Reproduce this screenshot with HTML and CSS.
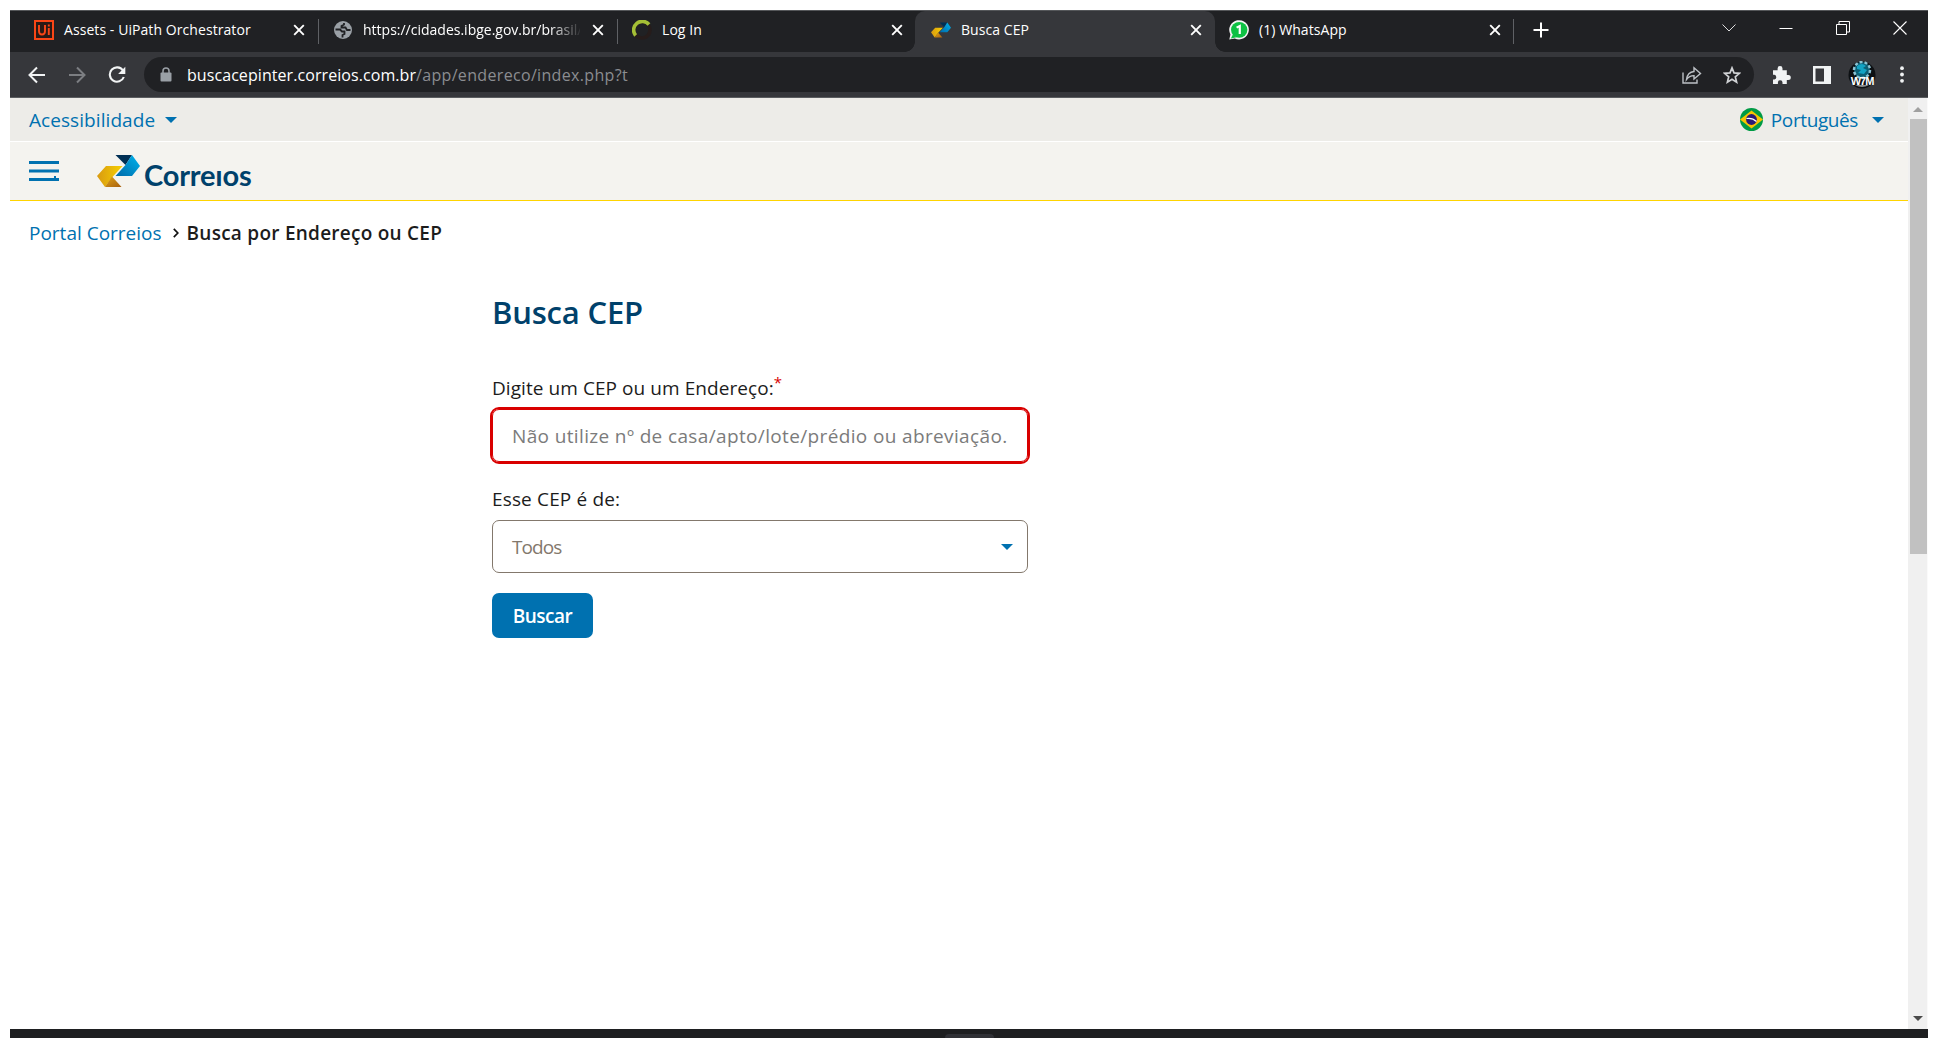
FILE: index.html
```html
<!DOCTYPE html>
<html lang="pt-BR">
<head>
<meta charset="utf-8">
<title>Busca CEP</title>
<link rel="stylesheet" href="styles.css">
</head>
<body>
<svg class="defs" width="0" height="0">
  <defs>
    <linearGradient id="gold" x1="0" y1="0" x2="1" y2="0"><stop offset="0" stop-color="#d99a12"/><stop offset="1" stop-color="#f6d000"/></linearGradient>
    <linearGradient id="brown" x1="0" y1="0" x2="1" y2="1"><stop offset="0" stop-color="#e0a518"/><stop offset="1" stop-color="#a8600f"/></linearGradient>
    <linearGradient id="sky" x1="0" y1="1" x2="1" y2="0"><stop offset="0" stop-color="#0069a8"/><stop offset="1" stop-color="#00b4ee"/></linearGradient>
    <symbol id="mark" viewBox="0 0 43 32">
      <path d="M9 11h16.500L15 22.500 8 32 0 21z" fill="url(#gold)"/>
      <path d="M15 21.500L24.500 32H8z" fill="url(#brown)"/>
      <path d="M18.500 0H35L28.500 10z" fill="#002f54"/>
      <path d="M35 0l8 11-8 10H18.500L28.500 10z" fill="url(#sky)"/>
    </symbol>
    <symbol id="close" viewBox="0 0 12 12"><path d="M1.200 1.200l9.600 9.600M10.800 1.200l-9.600 9.600" stroke="#fff" stroke-width="1.900"/></symbol>
  </defs>
</svg>
<div class="window">
  <div class="tabs">
    <div class="tab">
      <svg class="fav" width="20" height="20" viewBox="0 0 20 20"><path d="M1 1h18v18H1z" fill="#2b1a16" stroke="#fa4616" stroke-width="2"/><path d="M5 5v6q0 3.500 3 3.500T11 11V5M14.800 8v7M14.800 4.500v2" fill="none" stroke="#fa4616" stroke-width="1.900"/></svg>
      <span class="title">Assets - UiPath Orchestrator</span>
      <svg class="x" width="12" height="12"><use href="#close"/></svg>
    </div>
    <div class="tab sep">
      <svg class="fav" width="20" height="20" viewBox="0 0 20 20"><circle cx="10" cy="10" r="9" fill="#9aa0a6"/><path d="M2.500 9.500h4.500l2 2h2.500v2.500l-2 1v2.500M11 3v1.500L8.500 6v1.500h4L14 10h3.500" fill="none" stroke="#202124" stroke-width="1.800"/></svg>
      <span class="title clip">https://cidades.ibge.gov.br/brasil/</span>
      <svg class="x" width="12" height="12"><use href="#close"/></svg>
    </div>
    <div class="tab sep">
      <svg class="fav" width="20" height="20" viewBox="0 0 20 20"><circle cx="10" cy="10" r="8" fill="none" stroke="#261c1b" stroke-width="3.600"/><path d="M3.600 15.500A8.200 8.200 0 0 1 17 4.500" fill="none" stroke="#a5bf36" stroke-width="3.600"/></svg>
      <span class="title">Log In</span>
      <svg class="x" width="12" height="12"><use href="#close"/></svg>
    </div>
    <div class="tab active">
      <svg class="fav" width="20" height="20"><use href="#mark"/></svg>
      <span class="title">Busca CEP</span>
      <svg class="x" width="12" height="12"><use href="#close"/></svg>
    </div>
    <div class="tab last">
      <svg class="fav" width="20" height="20" viewBox="0 0 21 25" preserveAspectRatio="none"><path d="M.3 24.500L1.500 18A10.300 12 0 1 1 6 23z" fill="#f4f4f4"/><ellipse cx="10.700" cy="12.300" rx="8.600" ry="9.800" fill="#0dc143"/><path d="M2 23l2-5 4 3.500z" fill="#0dc143"/><path d="M8 9.500L11.300 7.500V17.500" fill="none" stroke="#fff" stroke-width="2.300"/></svg>
      <span class="title">(1) WhatsApp</span>
      <svg class="x" width="12" height="12"><use href="#close"/></svg>
    </div>
    <div class="newtab"><svg width="16" height="16" viewBox="0 0 16 16"><path d="M8 .5v15M.5 8h15" stroke="#fff" stroke-width="2"/></svg></div>
    <div class="controls">
      <svg width="14" height="8" viewBox="0 0 14 8"><path d="M.5.500L7 7l6.500-6.500" fill="none" stroke="#ddd"/></svg>
      <svg width="14" height="8" viewBox="0 0 14 8"><path d="M.5 4.500h13" stroke="#fff"/></svg>
      <svg width="14" height="14" viewBox="0 0 14 14"><path d="M.5 3.500h10v10H.5zM3 3.500v-3h10.500v10.500h-3" fill="none" stroke="#fff"/></svg>
      <svg width="14" height="14" viewBox="0 0 14 14"><path d="M.5.500l13 13M13.500.500l-13 13" stroke="#fff" stroke-width="1.100"/></svg>
    </div>
  </div>
  <div class="toolbar">
    <svg class="back" width="18" height="18" viewBox="0 0 18 18"><path d="M17 9H2M9 1.500L1.500 9 9 16.500" fill="none" stroke="#f1f3f4" stroke-width="2"/></svg>
    <svg class="fwd" width="18" height="18" viewBox="0 0 18 18"><path d="M1 9h15M9 1.500L16.500 9 9 16.500" fill="none" stroke="#7c7e82" stroke-width="2"/></svg>
    <svg class="reload" width="18" height="18" viewBox="0 0 18 18"><path d="M15 4.500A7.200 7.200 0 1 0 15.800 11" fill="none" stroke="#f1f3f4" stroke-width="2.100"/><path d="M17.300.800v7.200h-7.200z" fill="#f1f3f4"/></svg>
    <div class="omni">
      <svg width="12" height="15" viewBox="0 0 12 15"><path d="M3 6V4a3 3 0 0 1 6 0v2" fill="none" stroke="#9aa0a6" stroke-width="1.500"/><rect x=".5" y="5.500" width="11" height="9" rx="1" fill="#9aa0a6"/></svg>
      <span class="url">buscacepinter.correios.com.br<span class="path">/app/endereco/index.php?t</span></span>
      <svg class="share" width="20" height="18" viewBox="0 0 20 18"><path d="M1 6.500V17h14v-3.500" fill="none" stroke="#bdc1c6" stroke-width="1.400"/><path d="M4.500 13.500Q5.500 6 12 5.500V1.800L18.500 7.500 12 13V9.600Q7.500 9.500 4.500 13.500z" fill="none" stroke="#bdc1c6" stroke-width="1.400"/></svg>
      <svg class="star" width="18" height="18" viewBox="0 0 18 18"><path d="M9 1.900l2 5 5.400.400-4.100 3.500 1.300 5.300L9 13.200l-4.600 2.900 1.300-5.300L1.600 7.300 7 6.900z" fill="none" stroke="#d0d2d5" stroke-width="1.700"/></svg>
    </div>
    <svg class="ext" width="18" height="18" viewBox="0 0 18 18"><path d="M0 4.200h4.600V2.500a2.400 2.400 0 0 1 4.900 0v1.700h4.300v4.700h1.500a2.500 2.500 0 0 1 0 5h-1.500V18H9.500v-1.500a2.300 2.300 0 0 0-4.600 0V18H0v-4.500h1.400a2.400 2.400 0 0 0 0-4.700H0z" fill="#f1f3f4"/></svg>
    <svg class="panel" width="18" height="18" viewBox="0 0 18 18"><path d="M0 0h18v18H0zM2.500 2.500v13H11v-13z" fill="#f1f3f4" fill-rule="evenodd"/></svg>
    <svg class="avatar" width="28" height="28" viewBox="0 0 28 28"><circle cx="14" cy="14" r="13.500" fill="#0d1013"/><circle cx="14" cy="9" r="8" fill="#0c5f75" stroke="#8ec3d3" stroke-width="2.500" stroke-dasharray="3 2"/><path d="M9 5q5-4 9 0l-3 2 4 2-3 4-6-1 3-3-4-1z" fill="#13a3c4"/><path d="M7 24q7 4 14 0z" fill="#8b8e90"/><text x="14" y="23.500" text-anchor="middle">W7M</text></svg>
    <svg class="menu" width="4" height="17" viewBox="0 0 4 17"><circle cx="2" cy="2.200" r="1.900"/><circle cx="2" cy="8.500" r="1.900"/><circle cx="2" cy="14.800" r="1.900"/></svg>
  </div>
  <div class="view">
    <div class="page">
      <div class="access">
        <a><span class="acc">Acessibilidade</span><i class="caret"></i></a>
        <a class="lang"><svg width="23" height="23" viewBox="0 0 23 23"><circle cx="11.500" cy="11.500" r="11.500" fill="#009b45"/><path d="M0 11.500L11.500 2.500 23 11.500 11.500 20.500z" fill="#f7c400"/><circle cx="11.500" cy="11.500" r="5.400" fill="#2b1a75"/><path d="M6.500 10.500q6-1 10 3" fill="none" stroke="#fff" stroke-width="1.200"/></svg><span class="pt">Português</span><i class="caret"></i></a>
      </div>
      <div class="header">
        <svg class="burger" width="30" height="20" viewBox="0 0 30 20"><path d="M0 1.500h30M0 10h30M0 18.500h30M25 16.500h2" stroke="#0071b0" stroke-width="3"/></svg>
        <svg class="logo" width="43" height="32"><use href="#mark"/></svg>
        <span class="brand">Correıos</span>
      </div>
      <div class="crumbs"><span>Portal Correios</span><svg width="6" height="10" viewBox="0 0 6 10"><path d="M.8.800L4.800 5 .8 9.200" fill="none" stroke="#111" stroke-width="1.700"/></svg><b class="here">Busca por Endereço ou CEP</b></div>
      <div class="form">
        <h1>Busca CEP</h1>
        <label>Digite um CEP ou um Endereço:<sup>*</sup></label>
        <div class="field error"><span class="ph">Não utilize nº de casa/apto/lote/prédio ou abreviação.</span></div>
        <label class="second">Esse CEP é de:</label>
        <div class="field select"><span class="chosen">Todos</span><i class="caret"></i></div>
        <div class="button">Buscar</div>
      </div>
    </div>
    <div class="scroll"><i class="up"></i><div class="thumb"></div><i class="down"></i></div>
  </div>
  <div class="taskbar"><div class="chip"></div></div>
</div>
</body>
</html>
```
FILE: styles.css
```css
* { box-sizing: border-box; }
body { margin: 0; padding: 10px 10px 0; width: 1938px; height: 1038px; overflow: hidden; background: #fff; font-family: "Open Sans", sans-serif; }
.defs { position: absolute; }
svg { display: block; flex: none; }
span, b, label { white-space: nowrap; }
.window { width: 1918px; height: 1028px; display: flex; flex-direction: column; }
.tabs { height: 42px; display: flex; background: #202124; border-top: 1px solid #55575a; color: #fff; font-size: 14px; letter-spacing: 0.07px; }
.tab { width: 299px; flex: none; display: flex; align-items: center; padding: 0 4px 3px 24px; position: relative; }
.tab .title { flex: 1; min-width: 0; margin-left: 10px; padding-bottom: 2px; }
.tab.sep::before { content: ""; position: absolute; left: 9px; top: 8px; width: 1px; height: 25px; background: #5f6165; }
.tab .clip { margin-right: 12px; letter-spacing: 0; mask-image: linear-gradient(90deg, #000 86%, transparent 101%); }
.active { z-index: 0; }
.active::before { content: ""; position: absolute; z-index: -1; inset: 0 -9px 0 8px; background: #36373b; border-radius: 10px 10px 0 0; }
.active::after { content: ""; position: absolute; z-index: -1; left: -2px; right: -19px; bottom: 0; height: 10px; background: radial-gradient(circle at 0 0, transparent 9.500px, #36373b 10px) left / 10px 10px no-repeat, radial-gradient(circle at 100% 0, transparent 9.500px, #36373b 10px) right / 10px 10px no-repeat; }
.tab.last { padding-left: 23px; }
.newtab { width: 44px; padding: 11px 0 0 28px; background: linear-gradient(#5f6165, #5f6165) 8px 8px / 1px 25px no-repeat; }
.controls { display: flex; align-items: center; gap: 43px; margin-left: auto; padding: 0 21px 8px 0; }
.toolbar { height: 46px; display: flex; align-items: center; background: #36373b; border-bottom: 1px solid #5b5d60; padding: 0 23px 0 18px; }
.fwd { margin-left: 22px; }
.reload { margin-left: 22px; }
.omni { width: 1610px; height: 35px; border-radius: 18px; background: #202124; margin-left: 18px; display: flex; align-items: center; padding: 0 13px 0 16px; }
.url { margin-left: 15px; flex: 1; font-size: 16px; letter-spacing: 0.07px; color: #fff; }
.path { color: #8b8d91; letter-spacing: 0.33px; }
.star { margin-left: 21px; }
.ext { margin-left: 19px; }
.panel { margin-left: 22px; }
.avatar { margin-left: 17px; }
.avatar text { font: bold 11px "Liberation Sans", sans-serif; letter-spacing: -1px; fill: #fff; }
.menu { margin-left: 24px; fill: #f1f3f4; }
.view { flex: 1; display: flex; min-height: 0; }
.page { flex: 1; }
.access { height: 44px; background: #edece8; border-bottom: 1px solid #fff; display: flex; justify-content: space-between; padding: 0 24px 0 19px; font-size: 19px; color: #0071b0; }
.access a { display: flex; align-items: center; }
.caret { border: 6px solid transparent; border-top-color: #0071b0; border-bottom: 0; }
.acc { margin-right: 10px; letter-spacing: 0.07px; }
.pt { margin: 0 14px 0 8px; letter-spacing: -0.4px; }
.header { height: 59px; background: #f4f3ef; border-bottom: 1px solid #ffd400; display: flex; padding: 13px 0 0 19px; }
.burger { margin-top: 6px; }
.logo { margin-left: 38px; }
.brand { margin-left: 4px; font: bold 29px/32px Lato, sans-serif; letter-spacing: -0.2px; color: #00416b; padding-top: 4px; }
.crumbs { display: flex; align-items: center; padding: 17px 0 0 19px; height: 46px; font-size: 19px; color: #0071b0; }
.crumbs svg { margin: 0 8px 0 11px; }
.here { color: #1c1c1c; font-weight: 600; letter-spacing: 0.25px; }
.form { width: 536px; margin-left: 482px; display: flex; flex-direction: column; color: #1c1c1c; font-size: 19px; }
h1 { margin: 43px 0 0; font-size: 31px; line-height: 44px; letter-spacing: -0.2px; font-weight: 600; color: #00416b; }
label { line-height: 28px; margin: 40px 0 7px; letter-spacing: 0.07px; }
label.second { margin-top: 23px; letter-spacing: 0.15px; }
sup { font-size: 15px; color: #d90000; line-height: 0; }
.field { height: 53px; border-radius: 7px; border: 1px solid #83786c; display: flex; align-items: center; justify-content: space-between; padding: 0 14px 0 19px; background: #fff; color: #7b7b7b; }
.ph { letter-spacing: 0.36px; }
.chosen { letter-spacing: -0.9px; color: #83786c; }
.error { border-color: #d90000; outline: 2.500px solid #d90000; }
.button { width: 101px; height: 45px; margin-top: 20px; border-radius: 7px; background: #0071b0; color: #fff; font-weight: 600; letter-spacing: -0.5px; display: flex; align-items: center; justify-content: center; }
.scroll { width: 20px; background: #f0f0f0; border-right: 1px solid #fafafa; display: flex; flex-direction: column; align-items: center; padding-left: 1px; }
.up { margin-top: 9px; border: 5px solid transparent; border-bottom-color: #a0a0a0; border-top: 0; }
.thumb { width: 17px; height: 435px; background: #c1c1c1; margin-top: 7px; }
.down { margin: auto 0 8px; border: 5px solid transparent; border-top-color: #4a4a4a; border-bottom: 0; }
.taskbar { height: 9px; background: #1e1f21; display: flex; justify-content: center; }
.chip { width: 49px; height: 4px; margin-top: 5px; border-radius: 4px 4px 0 0; background: #303136; }
```
